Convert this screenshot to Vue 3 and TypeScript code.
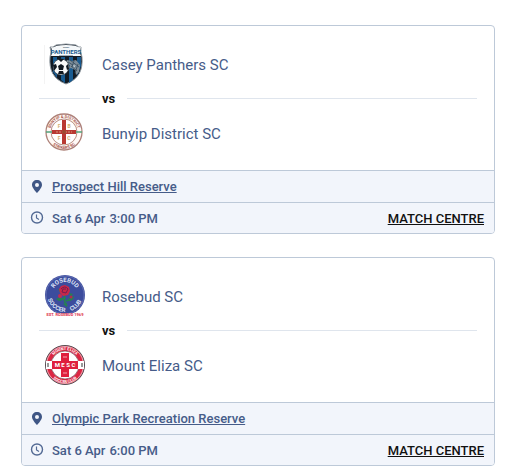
<script setup lang="ts">
interface Team {
  name: string
  logo: 'panthers' | 'bunyip' | 'rosebud' | 'eliza'
}

interface Match {
  id: number
  teams: [Team, Team]
  venue: string
  date: string
  time: string
}

const matches: Match[] = [
  {
    id: 1,
    teams: [
      { name: 'Casey Panthers SC', logo: 'panthers' },
      { name: 'Bunyip District SC', logo: 'bunyip' },
    ],
    venue: 'Prospect Hill Reserve',
    date: 'Sat 6 Apr',
    time: '3:00 PM',
  },
  {
    id: 2,
    teams: [
      { name: 'Rosebud SC', logo: 'rosebud' },
      { name: 'Mount Eliza SC', logo: 'eliza' },
    ],
    venue: 'Olympic Park Recreation Reserve',
    date: 'Sat 6 Apr',
    time: '6:00 PM',
  },
]
</script>

<template>
  <main class="fixtures">
    <article v-for="match in matches" :key="match.id" class="card">
      <div class="teams">
        <template v-for="(team, index) in match.teams" :key="team.name">
          <div v-if="index === 1" class="versus"><span>vs</span></div>
          <div class="team">
            <svg v-if="team.logo === 'panthers'" class="logo" viewBox="0 0 42 42" aria-hidden="true">
              <path d="M.5 2V41" stroke="#f3f3f3" />
              <path d="M6 4Q9 5 12 2Q22 0 32 2Q35 5 37 4Q36 9 38 14C39 27 35 36 22 41C9 36 5 27 6 14Q8 9 6 4Z" fill="#111a24" stroke="#8e979f" />
              <path d="M9 14h4v21l-4-6ZM17 14h4v26l-4-3ZM25 14h4v23l-4 3ZM33 14h4v9l-4 10Z" fill="#185b91" />
              <path d="M7 4Q10 5 12 3Q22 1 32 3Q35 5 37 4Q35 9 37 13H7Q9 9 7 4Z" fill="#f5f8fa" />
              <text x="22" y="5" class="crest-text navy" font-size="2">CASEY</text>
              <text x="22" y="11" class="crest-text blue" font-size="6">PANTHERS</text>
              <path d="M15 12.500h14" stroke="#8293a0" stroke-width=".7" />
              <path d="M23 17l5 1 4-1 4 5-1 7-3 3-1-5-4-2-3 1 2-4-5-1Z" fill="#7d8c97" />
              <path d="M24 19l8 5M26 17l9 7M27 23l6 5M30 18l-2 6M34 21l-3 9" stroke="#344b5e" stroke-width=".8" />
              <path d="M29 22l3 1-2 1Z" fill="#dce9f1" />
              <circle cx="17" cy="24" r="8" fill="#f9f9f9" stroke="#27333d" stroke-width=".7" />
              <path d="M17 21l3 2-1 4h-4l-1-4ZM14 16h6l-3 3ZM9 22l3-1 1 3-3 4ZM24 21l-2 2 1 4 2-1ZM14 31l1-3h4l1 3Z" fill="#111820" />
            </svg>

            <svg v-else-if="team.logo === 'bunyip'" class="logo" viewBox="0 0 42 42" aria-hidden="true">
              <defs>
                <path id="bunyip-top" d="M6 20A14 14 0 0 1 34 20" />
                <path id="bunyip-bottom" d="M3 20A17 17 0 0 0 37 20" />
              </defs>
              <circle cx="20" cy="20" r="18" fill="#fff9f6" stroke="#ad8078" stroke-width="1.300" />
              <circle cx="20" cy="20" r="13" fill="#fff" stroke="#b98f84" />
              <path d="M2 20h6M32 20h6" stroke="#52a17b" stroke-width="1.500" />
              <path d="M18 8h4v10h10v4H22v10h-4V22H8v-4h10Z" fill="#b93932" />
              <path d="M12 20h16" stroke="#d19a7b" stroke-dasharray="2 1" />
              <circle cx="20" cy="20" r="2" fill="#9c4a30" />
              <g class="crest-text gold" font-size="5">
                <text x="15" y="16">F</text><text x="25" y="16">B</text>
                <text x="15" y="28">F</text><text x="25" y="28">C</text>
              </g>
              <text class="crest-text maroon" font-size="4"><textPath href="#bunyip-top" startOffset="50%">BUNYIP &amp; DISTRICT</textPath></text>
              <text class="crest-text maroon" font-size="4"><textPath href="#bunyip-bottom" startOffset="50%">STRIKERS SC</textPath></text>
            </svg>

            <svg v-else-if="team.logo === 'rosebud'" class="logo" viewBox="0 0 42 42" aria-hidden="true">
              <defs>
                <path id="rosebud-top" d="M8 20A13 13 0 0 1 34 20" />
                <path id="rosebud-bottom" d="M3 19A18 18 0 0 0 39 19" />
              </defs>
              <circle cx="21" cy="20" r="20" fill="#3c4c9d" />
              <circle cx="21" cy="20" r="19" fill="none" stroke="#7682bd" stroke-width=".6" />
              <path d="M22 17Q18 25 23 31M22 23l-7 2M22 26l6-2" fill="none" stroke="#268052" stroke-width="1.500" />
              <path d="M12 24q4-3 7 0-3 4-7 0ZM24 24l6-3q0 5-6 5ZM14 14l5 1-2 4ZM19 29l4-1v4ZM25 18l4 1-2 3Z" fill="#268052" />
              <path d="M17 11l4-1 4 2 1 4-2 4-5 1-3-3-1-4Z" fill="#c92748" />
              <path d="M17 14q4-4 7 0l-2 4-4-1 1-3h3" fill="none" stroke="#741e50" />
              <circle cx="16" cy="21" r="2" fill="#c52b50" /><circle cx="27" cy="22" r="1.500" fill="#b5294f" />
              <text class="crest-text pale" font-size="6"><textPath href="#rosebud-top" startOffset="50%">ROSEBUD</textPath></text>
              <text class="crest-text pale" font-size="6"><textPath href="#rosebud-bottom" startOffset="30%">SOCCER</textPath></text>
              <text class="crest-text pale" font-size="6"><textPath href="#rosebud-bottom" startOffset="74%">CLUB</textPath></text>
              <path d="M5 36Q21 41 37 36V42H5Z" fill="#fff" />
              <text x="21" y="41" class="crest-text red" font-size="4">EST. ROSEBUD 1969</text>
            </svg>

            <svg v-else class="logo" viewBox="0 0 42 42" aria-hidden="true">
              <defs>
                <path id="eliza-top" d="M6 21A15 15 0 0 1 36 21" />
                <path id="eliza-bottom" d="M3 21A18 18 0 0 0 39 21" />
              </defs>
              <circle cx="21" cy="21" r="19.500" fill="#dc2643" stroke="#514d52" />
              <circle cx="21" cy="21" r="18.500" fill="none" stroke="#f5dce0" stroke-width=".7" />
              <circle cx="21" cy="21" r="14" fill="#fff" stroke="#794951" stroke-width=".7" />
              <path d="M2 17h38v8H2Z" fill="#fff" />
              <path d="M4 19v4M38 19v4" stroke="#777" stroke-width="1.500" />
              <path d="M17 9h8v8h9v8h-9v8h-8v-8H8v-8h9Z" fill="#df1f3d" />
              <path d="M19 13h4M19 29h4" stroke="#f4a6b0" />
              <text x="21" y="23" class="crest-text white" font-size="6">M E S C</text>
              <text class="crest-text white" font-size="4"><textPath href="#eliza-top" startOffset="50%">MOUNT ELIZA</textPath></text>
              <text class="crest-text white" font-size="4"><textPath href="#eliza-bottom" startOffset="50%">SOCCER CLUB</textPath></text>
            </svg>
            <span class="name">{{ team.name }}</span>
          </div>
        </template>
      </div>

      <div class="detail">
        <svg class="icon" viewBox="0 0 14 14" aria-hidden="true">
          <path fill-rule="evenodd" d="M7 0C4 0 2 2 2 5C2 8 7 13 7 13S12 8 12 5C12 2 10 0 7 0ZM7 3A2 2 0 1 1 7 7A2 2 0 0 1 7 3Z" fill="#3f5685" />
        </svg>
        <a class="venue" href="#">{{ match.venue }}</a>
      </div>
      <div class="detail">
        <svg class="icon" viewBox="0 0 14 14" aria-hidden="true">
          <circle cx="7" cy="6.500" r="5.500" fill="none" stroke="#536a94" stroke-width="1.400" />
          <path d="M6.500 3.500v3.500l2.500 1.500" fill="none" stroke="#536a94" stroke-width="1.200" />
        </svg>
        <time><span>{{ match.date }}</span><span>{{ match.time }}</span></time>
        <a class="centre" href="#">MATCH CENTRE</a>
      </div>
    </article>
  </main>
</template>

<style>
body {
  margin: 0;
  background: #fff;
}
</style>

<style scoped>
.fixtures {
  display: flex;
  flex-direction: column;
  gap: 23px;
  padding: 25px 25px 0 21px;
  font-family: Roboto, "Liberation Sans", sans-serif;
  color: #465c89;
}

.card {
  border: 1px solid #bdc9d8;
  border-radius: 4px;
  overflow: hidden;
}

.teams {
  padding: 17px 17px 16px;
}

.team {
  display: flex;
  align-items: center;
  gap: 16px;
  padding-left: 5px;
  font-size: 15px;
  line-height: 24px;
}

.name {
  padding-top: 2px;
}

.logo {
  flex: none;
  width: 42px;
  height: 42px;
}

.versus {
  display: flex;
  align-items: center;
  gap: 12px;
  height: 27px;
  color: #111;
  font-size: 13px;
  font-weight: 700;
}

.versus::before,
.versus::after {
  content: "";
  height: 1px;
  background: #dfe5ed;
}

.versus::before {
  width: 51px;
}

.versus::after {
  flex: 1;
}

.detail {
  display: flex;
  align-items: center;
  gap: 8px;
  min-height: 31px;
  padding: 0 10px 0 8px;
  border-top: 1px solid #bdc9d8;
  background: #f2f5fb;
  font-size: 13px;
  font-weight: 500;
}

.detail:last-child {
  min-height: 30px;
}

.icon {
  flex: none;
  width: 14px;
  height: 14px;
}

time {
  display: flex;
  gap: 4px;
}

.venue,
.centre {
  text-underline-offset: 1px;
  text-decoration-skip-ink: none;
}

.venue {
  color: #465c89;
}

.centre {
  margin-left: auto;
  color: #111;
}

.crest-text {
  font-family: Roboto, sans-serif;
  font-weight: 700;
  text-anchor: middle;
}

.navy { fill: #243b51; }
.blue { fill: #185b91; }
.gold { fill: #d3b16f; }
.maroon { fill: #a65347; }
.pale { fill: #dce3f6; }
.red { fill: #dd3149; }
.white { fill: #fff; }
</style>
